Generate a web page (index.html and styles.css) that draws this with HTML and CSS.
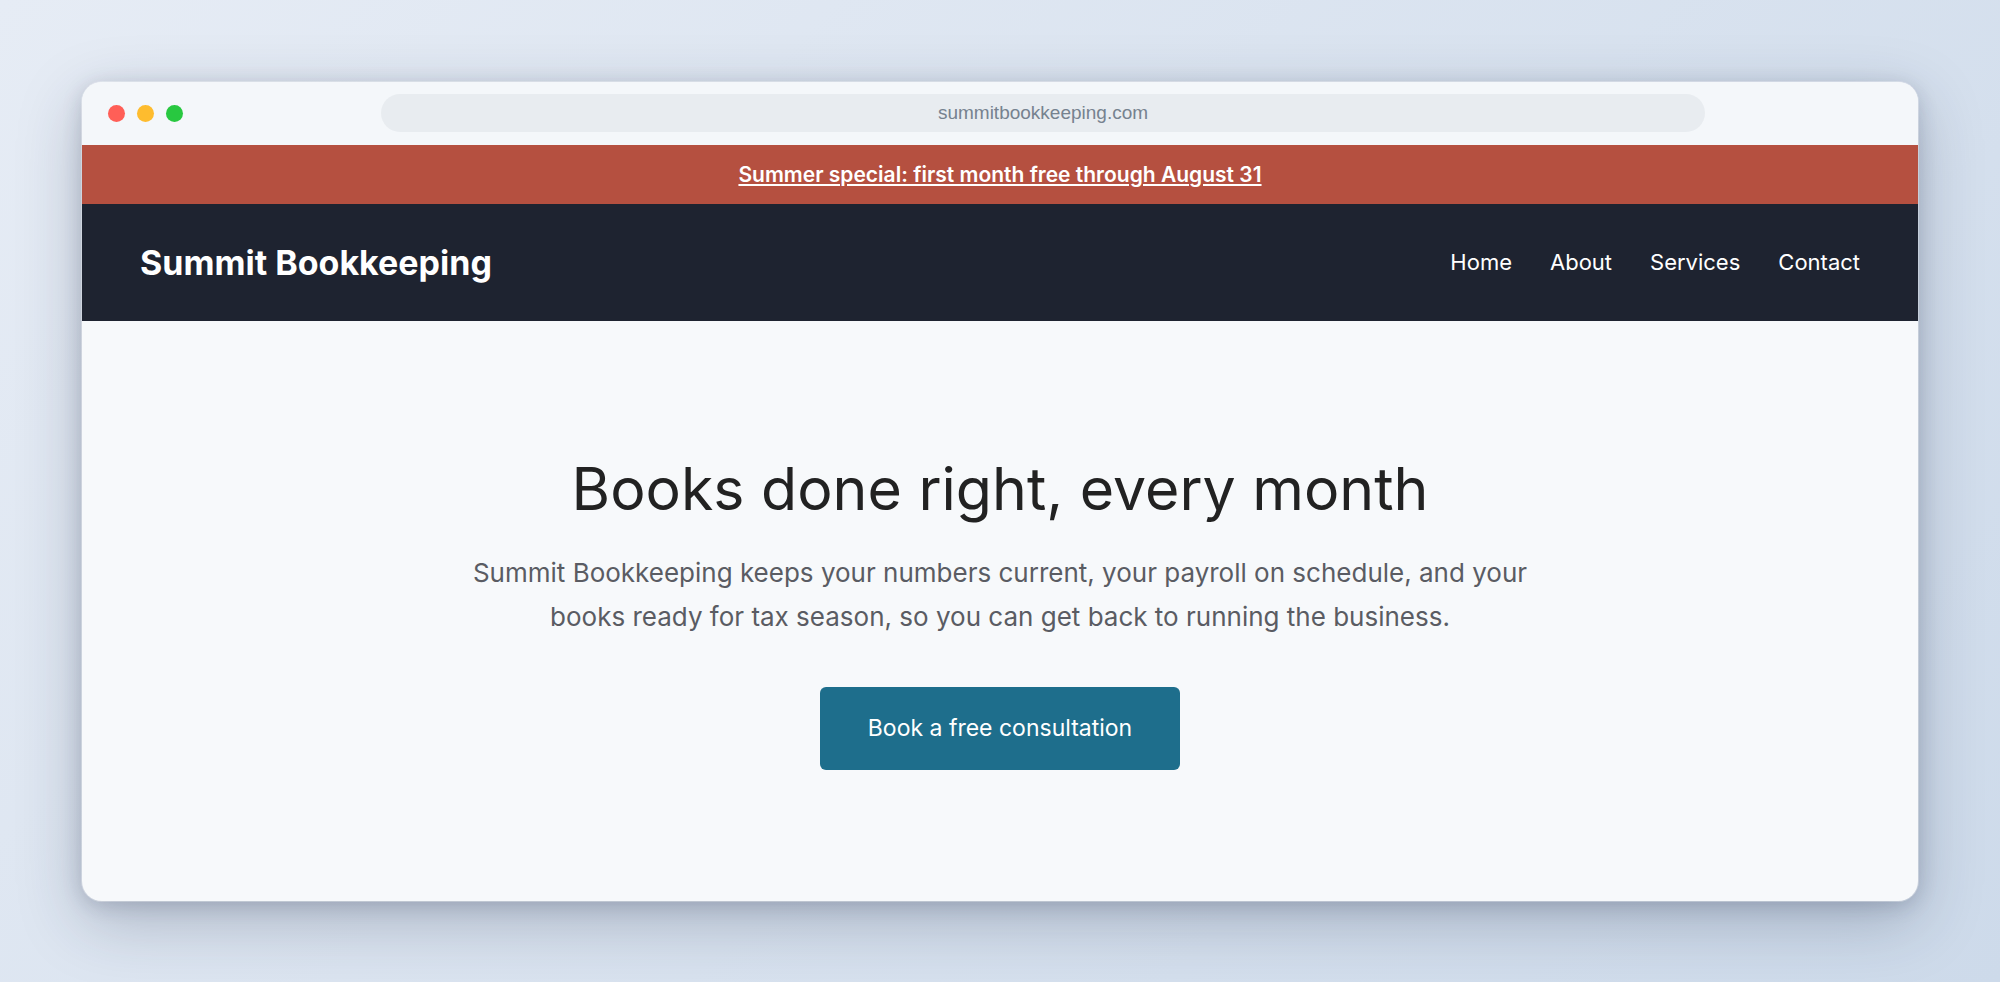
FILE: index.html
```html
<!DOCTYPE html>
<html lang="en">
<head>
    <meta charset="UTF-8">
    <meta name="viewport" content="width=device-width, initial-scale=1.0">
    <title>Summit Bookkeeping</title>
    <link rel="stylesheet" href="styles.css">
</head>
<body>
    <div class="window">
        <div class="toolbar">
            <div class="dots">
                <span class="dot red"></span>
                <span class="dot yellow"></span>
                <span class="dot green"></span>
            </div>
            <input class="address" type="text" value="summitbookkeeping.com" aria-label="Address" readonly>
        </div>
        <div class="banner">
            <a href="#">Summer special: first month free through August 31</a>
        </div>
        <header class="header">
            <div class="logo">Summit Bookkeeping</div>
            <nav class="nav">
                <a href="#">Home</a>
                <a href="#">About</a>
                <a href="#">Services</a>
                <a href="#">Contact</a>
            </nav>
        </header>
        <main class="hero">
            <h1>Books done right, every month</h1>
            <p>Summit Bookkeeping keeps your numbers current, your payroll on schedule, and your books ready for tax season, so you can get back to running the business.</p>
            <button type="button">Book a free consultation</button>
        </main>
    </div>
</body>
</html>
```

FILE: styles.css
```css
* {
    box-sizing: border-box;
}
body {
    margin: 0;
    min-height: 100vh;
    padding: 82px 82px 81px;
    display: flex;
    flex-direction: column;
    font-family: Inter, "Liberation Sans", sans-serif;
    background: linear-gradient(135deg, #e6ecf5, #cddaea);
}
.window {
    flex: 1;
    display: flex;
    flex-direction: column;
    overflow: hidden;
    border-radius: 20px;
    background: #f7f9fb;
    box-shadow: 0 0 0 1px rgba(255, 255, 255, 0.3), 0 20px 64px rgba(30, 41, 70, 0.26), 0 4px 20px rgba(30, 41, 70, 0.18);
}
.toolbar {
    display: flex;
    align-items: center;
    padding: 12px 213px 13px 26px;
    background: #f4f7fa;
}
.dots {
    display: flex;
    gap: 12px;
    width: 273px;
}
.dot {
    width: 17px;
    height: 17px;
    border-radius: 50%;
}
.red {
    background: #ff5f57;
}
.yellow {
    background: #febc2e;
}
.green {
    background: #28c840;
}
.address {
    flex: 1;
    height: 38px;
    border: none;
    border-radius: 19px;
    background: #e8ecf0;
    color: #76828f;
    font: 19px "Liberation Sans", sans-serif;
    text-align: center;
}
.banner {
    padding: 14px;
    background: #b55040;
    text-align: center;
    font-size: 21px;
    line-height: 31px;
    font-weight: 600;
}
.banner a {
    color: #fff;
}
.header {
    display: flex;
    align-items: center;
    justify-content: space-between;
    padding: 30px 58px;
    line-height: 57px;
    background: #1e2330;
    color: #fff;
}
.logo {
    font-size: 34px;
    font-weight: 700;
}
.nav {
    display: flex;
    gap: 38px;
    font-size: 22px;
}
.nav a {
    color: #fff;
    text-decoration: none;
}
.hero {
    padding: 128px 40px;
    text-align: center;
}
h1 {
    margin: 0 0 22px;
    font-size: 59px;
    line-height: 80px;
    font-weight: 400;
    color: #222;
}
.hero p {
    max-width: 1080px;
    margin: 0 auto 48px;
    font-size: 26px;
    line-height: 44px;
    color: #5a5c63;
}
button {
    padding: 22px 48px;
    border: none;
    border-radius: 6px;
    background: #1e6e8c;
    color: #fff;
    font-family: inherit;
    font-size: 23px;
    line-height: 39px;
    cursor: pointer;
}
```
